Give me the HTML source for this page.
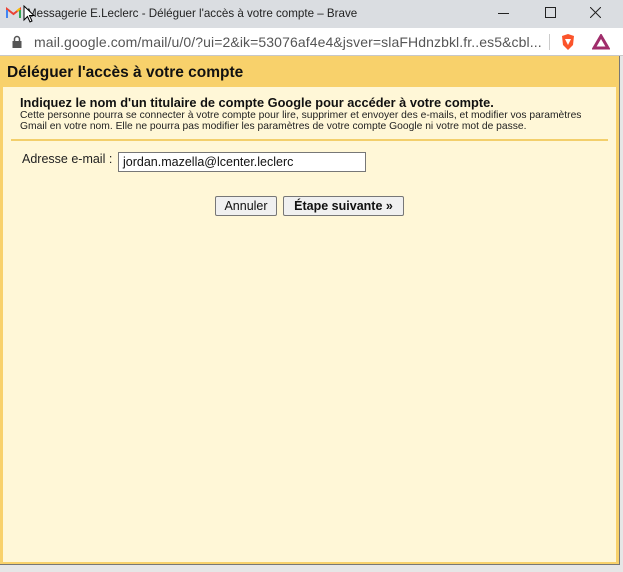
<!DOCTYPE html>
<html><head><meta charset="utf-8"><style>
*{margin:0;padding:0;box-sizing:border-box}
body{width:623px;height:572px;overflow:hidden;background:#e6e6e6;font-family:"Liberation Sans",Arial,sans-serif;position:relative}
.title{position:absolute;left:0;top:0;width:623px;height:28px;background:#dadde1;}
.title .t{position:absolute;left:27px;top:7px;font-size:11.6px;color:#222}
.addr{position:absolute;left:0;top:28px;width:623px;height:28px;background:#fff;border-bottom:1px solid #c8c8c8}
.addr .u{position:absolute;left:34px;top:6px;font-size:14px;color:#555;letter-spacing:0.1px}
.win{position:absolute;left:0;top:56px;width:620px;height:509px;background:#f8d16b;border-right:1px solid #777;border-bottom:1px solid #777}
.hdr{position:absolute;left:7px;top:8px;font-size:15.5px;font-weight:bold;color:#111}
.content{position:absolute;left:3px;top:31px;width:613px;height:475px;background:#fff7d7}
.h1{position:absolute;left:17px;top:8px;font-size:12.8px;font-weight:bold;color:#111}
.small{position:absolute;left:17px;top:23px;font-size:10.3px;color:#222;line-height:11px;width:600px;white-space:nowrap}
.sep{position:absolute;left:8px;top:52px;width:597px;height:2px;background:#f3cf6b}
.lbl{position:absolute;left:19px;top:65px;font-size:12.5px;color:#222}
.inp{position:absolute;left:115px;top:65px;width:248px;height:20px;border:1px solid #777;background:#fff;font-size:12.5px;padding:2px 0 0 4px;color:#111}
.btn{position:absolute;top:109px;height:20px;border:1px solid #777;border-radius:2px;background:#f0f0f0;font-size:12.5px;color:#111;text-align:center;padding-top:2px}
</style></head><body>
<div class="title">
<svg style="position:absolute;left:6px;top:7px" width="15" height="12" viewBox="0 0 15 12"><path d="M1 11V2l6.5 5L14 2v9" fill="none" stroke="#ea4335" stroke-width="2"/><path d="M1 11V3" stroke="#4285f4" stroke-width="2"/><path d="M14 11V3" stroke="#34a853" stroke-width="2"/><path d="M11 4l3-2.5" stroke="#fbbc04" stroke-width="2"/></svg>
<span class="t">Messagerie E.Leclerc - Déléguer l'accès à votre compte – Brave</span>
<svg style="position:absolute;left:23px;top:5px" width="12" height="18" viewBox="0 0 12 18"><path d="M1 1v14l3.5-3.5 2.5 5.5 2-1-2.5-5.5H11z" fill="#fff" stroke="#000"/></svg>
<div style="position:absolute;left:498px;top:13px;width:11px;height:1px;background:#222"></div>
<div style="position:absolute;left:545px;top:7px;width:11px;height:11px;border:1px solid #222"></div>
<svg style="position:absolute;left:590px;top:7px" width="11" height="11"><path d="M0 0L11 11M11 0L0 11" stroke="#222"/></svg>
</div>
<div class="addr">
<svg style="position:absolute;left:12px;top:7px" width="10" height="13"><path d="M2.5 6V4a2.5 2.5 0 0 1 5 0v2" fill="none" stroke="#555" stroke-width="1.5"/><rect x="0.5" y="6" width="9" height="7" fill="#555"/></svg>
<span class="u">mail.google.com/mail/u/0/?ui=2&amp;ik=53076af4e4&amp;jsver=slaFHdnzbkl.fr..es5&amp;cbl...</span>
<div style="position:absolute;left:549px;top:6px;width:1px;height:16px;background:#ccc"></div>
<svg style="position:absolute;left:560px;top:5px" width="16" height="18"><path d="M2 3l6-2 6 2-1 9-5 5-5-5z" fill="#fb542b"/><path d="M5 6h6l-3 6z" fill="#fff"/></svg>
<svg style="position:absolute;left:592px;top:6px" width="18" height="16"><path d="M9 2L16 14H2z" fill="none" stroke="#a02d6b" stroke-width="3"/></svg>
</div>
<div class="win">
<div class="hdr">Déléguer l'accès à votre compte</div>
<div class="content">
<div class="h1">Indiquez le nom d'un titulaire de compte Google pour accéder à votre compte.</div>
<div class="small">Cette personne pourra se connecter à votre compte pour lire, supprimer et envoyer des e-mails, et modifier vos paramètres<br>Gmail en votre nom. Elle ne pourra pas modifier les paramètres de votre compte Google ni votre mot de passe.</div>
<div class="sep"></div>
<div class="lbl">Adresse e-mail :</div>
<div class="inp">jordan.mazella@lcenter.leclerc</div>
<div class="btn" style="left:212px;width:62px">Annuler</div>
<div class="btn" style="left:280px;width:121px;font-weight:bold">Étape suivante »</div>
</div>
</div>
</body></html>
